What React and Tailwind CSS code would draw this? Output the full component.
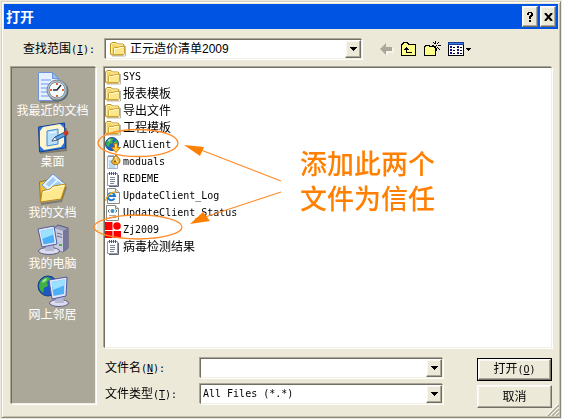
import { useState } from 'react';

const sunken =
  'border border-t-[#716f64] border-l-[#716f64] border-r-[#f1efe2] border-b-[#f1efe2] shadow-[-1px_-1px_0_#aca899,1px_1px_0_#ffffff]';
const raised =
  'bg-[#ece9d8] border border-t-white border-l-white border-r-[#716f64] border-b-[#716f64] shadow-[inset_-1px_-1px_0_#aca899,inset_1px_1px_0_#f8f6ee]';

function FolderIcon() {
  return (
    <svg width="16" height="16" viewBox="0 0 16 16" className="shrink-0">
      <path d="M2 15h13.500V5" fill="none" stroke="#8c8a80" opacity=".6" />
      <path d="M.5 13V3L2 1.500h4L7.500 3H13l1 1v9l-1 1H1.500z" fill="#f5d568" stroke="#b98f22" />
      <path d="M1.500 12V3.500l1-1h3L7 4h6" fill="none" stroke="#fff3b4" />
      <path d="M3.500 13.500v-6l1-1h4l1-1h5v7l-1 1z" fill="#fbe68c" stroke="#cfa437" />
      <path d="M4.500 12.500V8l.5-.5h4l1-1h3.500" fill="none" stroke="#fffbd6" />
    </svg>
  );
}

function UpdaterIcon() {
  return (
    <svg width="16" height="16" viewBox="0 0 16 16" className="shrink-0">
      <circle cx="7" cy="7" r="6.500" fill="#1f62c4" stroke="#174a95" />
      <path d="M2 4c1-2 3-3 5-3l2 1-2 2 1 2-3 1-1 3-2-1-1-2zM9 5l3-2 1 4-3 2-2-1z" fill="#42b04a" />
      <path d="M3 3l2-1 1 1-2 2z" fill="#a9e0a0" />
      <path d="M9.500 6.500h3v4h3L11 15.500 6.500 10.500h3z" fill="#ffc83a" stroke="#c57a12" />
      <path d="M10.500 7.500v4" stroke="#fff0a8" />
    </svg>
  );
}

function ConfigIcon() {
  return (
    <svg width="16" height="16" viewBox="0 0 16 16" className="shrink-0">
      <path d="M2.500 2.500h10v12h-10z" fill="#e8f3fc" stroke="#9db4cc" />
      <path d="M4 7h4M4 9h5M4 11h6M4 13h6" stroke="#8cbde2" />
      <path d="M4 1v2M6 1v2M8 1v2" stroke="#5b6f8a" />
      <path d="M11 .5l1 2 1.500 1 1.500 2.500-.5 3-2 1.500H9L7 9l-.5-2L8 6l.5-2.500 1.500-1z" fill="#eeb63c" stroke="#a9761c" />
      <path d="M10 4l1-1v3l2 2" fill="none" stroke="#fff4cf" />
      <circle cx="10" cy="7.500" r="1" fill="#6e5421" />
    </svg>
  );
}

function NotepadIcon() {
  return (
    <svg width="16" height="16" viewBox="0 0 16 16" className="shrink-0">
      <path d="M4 15.500h9.500V4" fill="none" stroke="#5f6470" />
      <path d="M2.500 2.500h10v12h-10z" fill="#fff" stroke="#8f98b4" />
      <path d="M4.500 1v3M6.500 1v3M8.500 1v3M10.500 1v3" stroke="#4b5260" />
      <path d="M5 6.500h5M5 8.500h5M5 10.500h5M5 12.500h4" stroke="#7d8696" />
    </svg>
  );
}

function HtmlIcon() {
  return (
    <svg width="16" height="16" viewBox="0 0 16 16" className="shrink-0">
      <path d="M2.500.5h8l4 4v11h-12z" fill="#fdfdfd" stroke="#8b8b86" />
      <path d="M10.500.5v4h4" fill="#dedede" stroke="#8b8b86" />
      <path d="M9.500 10.500A3.600 3.600 0 1 1 10 8H3.500" fill="none" stroke="#1e7bd2" strokeWidth="2" />
      <path d="M1 13C-.5 10 6 3.500 10.500 4" fill="none" stroke="#f0ad23" strokeWidth="1.400" />
    </svg>
  );
}

function XmlIcon() {
  return (
    <svg width="16" height="16" viewBox="0 0 16 16" className="shrink-0">
      <path d="M1.500.5h9l3 3v12h-12z" fill="#fdfdfd" stroke="#8b8b86" />
      <path d="M10.500.5v3h3" fill="#dedede" stroke="#8b8b86" />
      <path d="M4.500 4.500L3 6l1.500 1.500M10.500 4.500L12 6l-1.500 1.500" fill="none" stroke="#55697c" />
      <circle cx="7.500" cy="6" r="2" fill="#3e93c9" />
      <path d="M4 10.500h7M4 12.500h7" stroke="#a8a8a8" />
    </svg>
  );
}

function AppIcon() {
  return (
    <svg width="16" height="16" viewBox="0 0 16 16" className="shrink-0">
      <path d="M0 0h7.500v8H0zM0 9h7.500v7H0zM8.500 9H16v7H8.500z" fill="#f00" />
      <circle cx="12" cy="4" r="3.800" fill="#f00" />
    </svg>
  );
}

function RecentIcon() {
  return (
    <svg width="32" height="32" viewBox="0 0 32 32">
      <path d="M3 31h18V9" fill="none" stroke="#6e6c62" strokeWidth="2" opacity=".6" />
      <path d="M1.500 1.500h14l6 6v22h-20z" fill="#e6f0ff" stroke="#6d93dc" />
      <path d="M15.500 1.500v6h6z" fill="#9dbdf5" stroke="#6d93dc" />
      <path d="M4 9h10M4 13h8M4 17h6M4 21h6M4 25h9" stroke="#a9c4f4" strokeWidth="2" />
      <circle cx="21" cy="20" r="10.500" fill="#5b6570" />
      <circle cx="20" cy="19" r="10" fill="#b4c1cb" stroke="#7d8994" />
      <circle cx="20" cy="19" r="8" fill="#f4fbff" stroke="#7f93a3" />
      <path d="M20 12v2M20 24v2M13 19h2M25 19h2" stroke="#e8622a" strokeWidth="2" />
      <path d="M24 14l-4 5h-4" fill="none" stroke="#222b38" strokeWidth="1.500" />
    </svg>
  );
}

function DesktopIcon() {
  return (
    <svg width="32" height="32" viewBox="0 0 32 32">
      <path d="M3 31l26-3V6" fill="none" stroke="#5e5c55" strokeWidth="2" opacity=".6" />
      <path d="M1.500 5l26-4 1 25-26 4z" fill="#2277df" stroke="#123f92" />
      <path d="M3 9l3-4 17-3 4 4v15l-3 4-17 3-4-4z" fill="#fff5cf" />
      <path d="M10 9l11-2v15l-11 2z" fill="#b9e1fc" stroke="#3f8bd8" />
      <path d="M12 11l7-1" stroke="#fff" />
      <path d="M15 19l3-4 10-5 2 3-10 5z" fill="#5ba4e8" stroke="#1e4d94" />
      <path d="M15 19l3-4 2 3z" fill="#fff" stroke="#333" strokeWidth=".5" />
      <circle cx="29" cy="11" r="2.500" fill="#c23a2a" />
    </svg>
  );
}

function DocumentsIcon() {
  return (
    <svg width="32" height="32" viewBox="0 0 32 32">
      <path d="M4 31l20-3 5-14" fill="none" stroke="#5e5c55" strokeWidth="2" opacity=".6" />
      <path d="M2.500 9l8-2 3 3 12-2v17l-22 4z" fill="#efc340" stroke="#9c7416" />
      <path d="M5 12L16 1l12 10-10 13z" fill="#e4f1ff" stroke="#6c9bd8" />
      <path d="M9 11l7-7 3 3-7 7zM15 13l6-5 4 3-6 6z" fill="#9ecbf4" />
      <path d="M3.500 29L5 18l8-2 3-3 13-2-5 15z" fill="#ffe98f" stroke="#b88a1e" />
      <path d="M6 19l8-2 3-2.500 10-2" fill="none" stroke="#fffbdc" />
    </svg>
  );
}

function ComputerIcon() {
  return (
    <svg width="32" height="32" viewBox="0 0 32 32">
      <path d="M17 4l4-3 10 3v20l-5 4-9-3z" fill="#9c9dbb" stroke="#53557a" />
      <path d="M17 4l9 3v21l-9-3z" fill="#c9cadd" />
      <path d="M26 7l5-3v20l-5 4z" fill="#74769c" />
      <path d="M20 9l5 1.500M20 12l5 1.500" stroke="#6b6d90" />
      <path d="M22 21h3" stroke="#45b53c" strokeWidth="2" />
      <ellipse cx="12" cy="27" rx="10.500" ry="3.500" fill="#dcdcef" stroke="#5d5e86" />
      <path d="M9 20h7l1 7H8z" fill="#b7b8d4" />
      <path d="M1 5l16-3 3 18-15 3z" fill="#e5e7f8" stroke="#4f5ba0" />
      <path d="M3.500 7l12-2.500 2 14-11 2z" fill="#4bb0f7" />
      <path d="M3.500 7l12-2.500 1 6L5 15z" fill="#9be0ff" />
    </svg>
  );
}

function NetworkIcon() {
  return (
    <svg width="32" height="32" viewBox="0 0 32 32">
      <circle cx="11" cy="11" r="10" fill="#1d57c0" stroke="#163c86" />
      <path d="M3 7c2-4 6-5 8-5l3 2-4 3 1 4-4 2-1 5-3-3-1-4z" fill="#3faf46" />
      <path d="M5 6l4-3 1 2-4 3z" fill="#a4e598" />
      <ellipse cx="22" cy="28" rx="9.500" ry="3.500" fill="#dcdcef" stroke="#5d5e86" />
      <path d="M19 21h7l1 7h-9z" fill="#b7b8d4" />
      <path d="M12 5l18-3-1 19-14 3z" fill="#e5e7f8" stroke="#4f5ba0" />
      <path d="M14.500 7l13-2.500-.5 14.500-10.500 2z" fill="#4bb0f7" />
      <path d="M14.500 7l13-2.500-.5 6L16 15z" fill="#9be0ff" />
    </svg>
  );
}

function BackIcon() {
  return (
    <svg width="14" height="14" viewBox="0 0 14 14">
      <path d="M1 7.500L7 13v-3h6V6" fill="none" stroke="#fff" />
      <path d="M0 7l6-6v4h6v4H6v4z" fill="#aca899" />
    </svg>
  );
}

function UpIcon() {
  return (
    <svg width="16" height="16" viewBox="0 0 16 16" shapeRendering="crispEdges">
      <path d="M1 14V4h1V3h1V2h4v1h1v1h7v10z" fill="#ffff8c" />
      <path d="M.5 14.500V3.500h1v-1h1v-1h4v1h1v1h7v11z" fill="none" stroke="#000" />
      <path d="M5.500 6v5.500H11M3 8.500h5M4 7.500h3M5 6.500h1" fill="none" stroke="#000" />
    </svg>
  );
}

function NewFolderIcon() {
  return (
    <svg width="17" height="16" viewBox="0 0 17 16" shapeRendering="crispEdges">
      <path d="M1 14V6h1V5h4v1h6v8z" fill="#ffff8c" />
      <path d="M.5 14.500v-9h1v-1h4v1h6v9z" fill="none" stroke="#000" />
      <path
        d="M11 0h1v3h-1zM13 2h1v1h-1zM14 1h1v1h-1zM9 1h1v1H9zM10 2h1v1h-1zM8 4h2v1H8zM14 4h3v1h-3zM13 6h1v1h-1zM14 7h1v1h-1zM15 8h1v1h-1zM12 7h1v3h-1zM10 6h1v1h-1zM12 4h1v1h-1z"
        fill="#000"
      />
    </svg>
  );
}

function ViewIcon() {
  return (
    <svg width="24" height="16" viewBox="0 0 24 16" shapeRendering="crispEdges">
      <path d="M.5 1.500h15v13H.5z" fill="#fff" stroke="#000" />
      <path d="M0 1h16v3H0z" fill="#1a3a9a" />
      <path d="M1 2h14v1H1z" fill="#3a79e0" />
      <path d="M2 5h2v2H2zM2 8h2v2H2zM2 11h2v2H2zM9 5h2v2H9zM9 8h2v2H9zM9 11h2v2H9z" fill="#10107c" />
      <path d="M5 6h2v1H5zM5 9h2v1H5zM5 12h2v1H5zM12 6h2v1h-2zM12 9h2v1h-2zM12 12h2v1h-2z" fill="#000" />
      <path d="M18 7h5v1h-1v1h-1v1h-1V9h-1V8h-1z" fill="#000" />
    </svg>
  );
}

function DownArrow() {
  return (
    <svg width="7" height="4" viewBox="0 0 7 4" shapeRendering="crispEdges">
      <path d="M0 0h7v1H6v1H5v1H4v1H3V3H2V2H1V1H0z" fill="#000" />
    </svg>
  );
}

// Latin part of a caption, set in the narrow half-width face
function HotKey({ letter, colon }) {
  return (
    <span className="font-['DejaVu_Sans_Mono',monospace] text-[10px]">
      (<u>{letter}</u>){colon && ':'}
    </span>
  );
}

const places = [
  { label: '我最近的文档', Icon: RecentIcon },
  { label: '桌面', Icon: DesktopIcon },
  { label: '我的文档', Icon: DocumentsIcon },
  { label: '我的电脑', Icon: ComputerIcon },
  { label: '网上邻居', Icon: NetworkIcon }
];

const files = [
  { name: 'SYS', Icon: FolderIcon },
  { name: '报表模板', Icon: FolderIcon, cjk: true },
  { name: '导出文件', Icon: FolderIcon, cjk: true },
  { name: '工程模板', Icon: FolderIcon, cjk: true },
  { name: 'AUClient', Icon: UpdaterIcon },
  { name: 'moduals', Icon: ConfigIcon },
  { name: 'REDEME', Icon: NotepadIcon },
  { name: 'UpdateClient_Log', Icon: HtmlIcon },
  { name: 'UpdateClient_Status', Icon: XmlIcon },
  { name: 'Zj2009', Icon: AppIcon },
  { name: '病毒检测结果', Icon: NotepadIcon, cjk: true }
];

export default function App() {
  const [fileName, setFileName] = useState('');

  return (
    <div className="flex min-h-screen flex-col bg-[#ece9d8] p-px font-['Liberation_Sans','Noto_Sans_CJK_SC',sans-serif] text-xs leading-4 text-black">
      <div className="relative flex flex-1 flex-col border border-t-[#d6d2c2] border-l-[#d6d2c2] border-r-[#8b887a] border-b-[#8b887a] p-0.5 shadow-[inset_1px_1px_0_#ffffff,inset_-1px_-1px_0_#c5c2b2]">
        <header className="flex h-[25px] items-center gap-0.5 bg-[#0054e3] pr-0.5 pl-0.5">
          <h1 className="flex-1 text-sm font-bold text-white">打开</h1>
          <button type="button" aria-label="帮助" className={`flex h-[21px] w-4 items-center justify-center ${raised}`}>
            <svg width="8" height="10" viewBox="0 0 8 10" shapeRendering="crispEdges">
              <path d="M2 0h4v1h1v3H6v1H5v2H3V4h1V3h1V1H3v2H1V1h1zM3 8h2v2H3z" fill="#000" />
            </svg>
          </button>
          <button type="button" aria-label="关闭" className={`flex h-[21px] w-4 items-center justify-center ${raised}`}>
            <svg width="9" height="8" viewBox="0 0 9 8">
              <path d="M1 0l7 8M8 0L1 8" stroke="#000" strokeWidth="2" />
            </svg>
          </button>
        </header>

        <div className="flex items-center pt-2.5 pl-[19px]">
          <label htmlFor="lookin" className="w-[82px] shrink-0">
            查找范围<HotKey letter="I" colon />
          </label>
          <div className={`relative flex h-5 w-[257px] items-center bg-white pl-1 ${sunken}`}>
            <FolderIcon />
            <select id="lookin" className="h-full min-w-0 flex-1 appearance-none bg-white pl-1 outline-none">
              <option>正元造价清单2009</option>
            </select>
            <span className={`pointer-events-none absolute top-0 right-0 flex h-[18px] w-4 items-center justify-center ${raised}`}>
              <DownArrow />
            </span>
          </div>
          <div className="ml-[18px] flex items-center gap-[7px]">
            <button type="button" aria-label="后退"><BackIcon /></button>
            <button type="button" aria-label="向上一级"><UpIcon /></button>
            <button type="button" aria-label="新建文件夹"><NewFolderIcon /></button>
            <button type="button" aria-label="查看"><ViewIcon /></button>
          </div>
        </div>

        <div className="flex flex-1 gap-2 pt-2 pr-1.5 pb-[7px] pl-[7px]">
          <nav className={`mb-1 flex w-[85px] shrink-0 flex-col gap-[3px] bg-[#aca899] pt-[3px] pr-0.5 ${sunken}`}>
            {places.map(({ label, Icon }) => (
              <button key={label} type="button" className="flex flex-col items-center text-white">
                <Icon />
                <span className="whitespace-nowrap">{label}</span>
              </button>
            ))}
          </nav>

          <div className="flex min-w-0 flex-1 flex-col">
            <div className={`relative flex-1 bg-white ${sunken}`}>
              <ul>
                {files.map(({ name, Icon, cjk }) => (
                  <li key={name} className="flex h-[17px] items-center gap-0.5">
                    <Icon />
                    <span className={cjk ? '' : "font-['DejaVu_Sans_Mono',monospace] text-[10px]"}>{name}</span>
                  </li>
                ))}
              </ul>
              {/* callout drawn over the list */}
              <svg width="200" height="190" viewBox="0 0 200 190" className="pointer-events-none absolute top-0 -left-3 overflow-visible">
                <g fill="none" stroke="#ff8c28" strokeWidth="1.300">
                  <ellipse cx="45" cy="75" rx="40" ry="13.500" />
                  <ellipse cx="45" cy="159" rx="44" ry="12" />
                  <path d="M108 82l80 31M112 149l76-25" />
                </g>
                <path d="M91 77l20 2-4 9zM97 156l13-12 7 9z" fill="#ff8000" />
              </svg>
              <p className="absolute top-20 left-[195px] text-[27px] leading-[35px] font-medium whitespace-nowrap text-[#ff8000]">
                添加此两个
                <br />
                文件为信任
              </p>
            </div>

            <form className="mt-2.5 flex justify-between gap-[34px] pl-px" onSubmit={(e) => e.preventDefault()}>
              <div className="flex flex-1 flex-col gap-1.5">
                <div className="flex items-center">
                  <label htmlFor="filename" className="w-[95px] shrink-0">
                    文件名<HotKey letter="N" colon />
                  </label>
                  <div className={`flex h-5 flex-1 bg-white ${sunken}`}>
                    <input
                      id="filename"
                      type="text"
                      autoFocus
                      value={fileName}
                      onChange={(e) => setFileName(e.target.value)}
                      className="min-w-0 flex-1 bg-white px-0.5 outline-none"
                    />
                    <button type="button" aria-label="历史记录" className={`flex w-4 items-center justify-center ${raised}`}>
                      <DownArrow />
                    </button>
                  </div>
                </div>
                <div className="flex items-center">
                  <label htmlFor="filetype" className="w-[95px] shrink-0">
                    文件类型<HotKey letter="T" colon />
                  </label>
                  <div className={`relative flex h-5 flex-1 bg-white ${sunken}`}>
                    <select
                      id="filetype"
                      className="min-w-0 flex-1 appearance-none bg-white pl-0.5 font-['DejaVu_Sans_Mono',monospace] text-[10px] outline-none"
                    >
                      <option>All Files (*.*)</option>
                    </select>
                    <span className={`pointer-events-none absolute top-0 right-0 flex h-[18px] w-4 items-center justify-center ${raised}`}>
                      <DownArrow />
                    </span>
                  </div>
                </div>
              </div>
              <div className="flex w-[75px] shrink-0 flex-col gap-1">
                <div className="bg-black p-px">
                  <button type="submit" className={`block h-[21px] w-full leading-4 ${raised}`}>
                    打开<HotKey letter="O" />
                  </button>
                </div>
                <button type="button" className={`h-[23px] leading-4 ${raised}`}>取消</button>
              </div>
            </form>
          </div>
        </div>

        <svg width="12" height="12" viewBox="0 0 12 12" className="absolute right-px bottom-px">
          <path d="M0 11L11 0M4 11l7-7M8 11l3-3" stroke="#fff" />
          <path d="M1 12L12 1M5 12l7-7M9 12l3-3" stroke="#aca899" strokeWidth="1.500" />
        </svg>
      </div>
    </div>
  );
}
